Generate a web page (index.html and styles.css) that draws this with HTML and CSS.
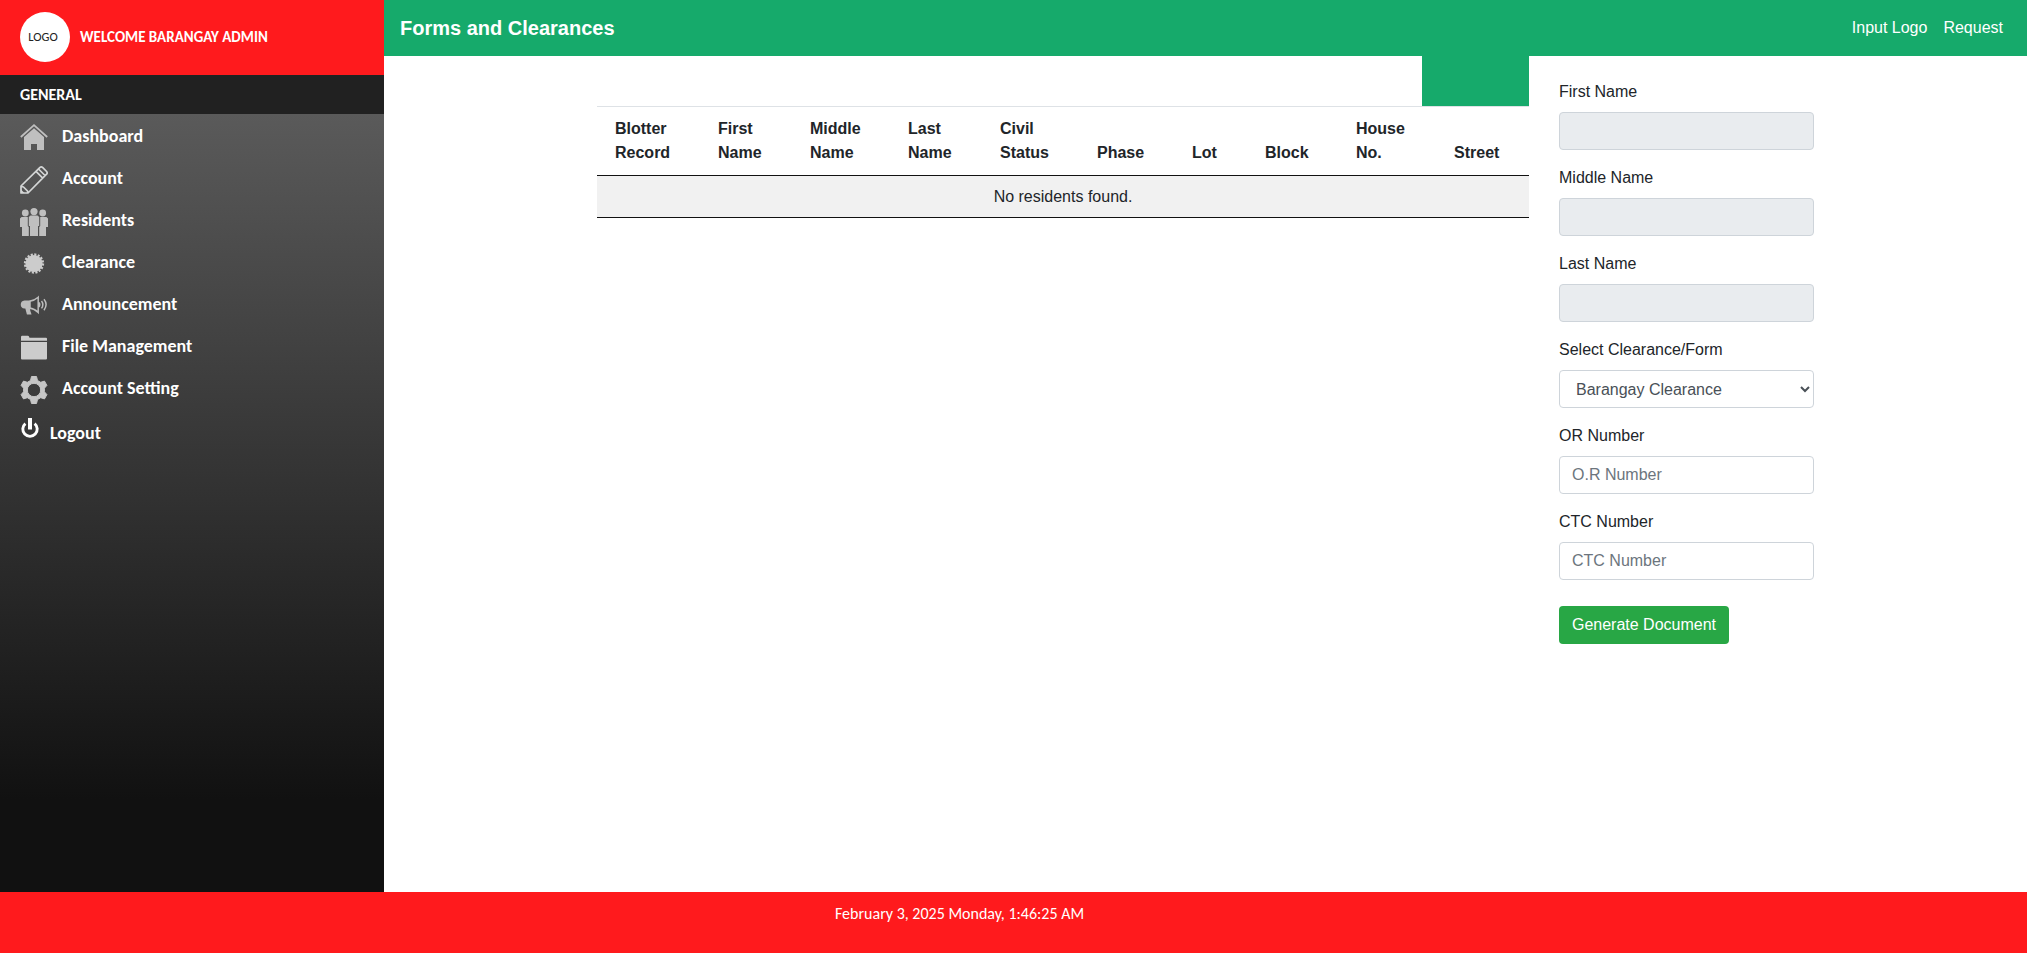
FILE: index.html
```html
<!DOCTYPE html>
<html lang="en">
<head>
<meta charset="utf-8">
<title>Forms and Clearances</title>
<link rel="stylesheet" href="styles.css">
</head>
<body>
<div class="page">
  <aside class="sidebar">
    <div class="brand"><div class="logo"><span>LOGO</span></div><span class="welcome">WELCOME BARANGAY ADMIN</span></div>
    <div class="section"><span>GENERAL</span></div>
    <nav class="menu">
      <a class="item"><svg class="icon" viewBox="0 0 28 28"><path fill="none" stroke="#bfbfbf" stroke-width="1.8" d="M.8 14 14 2.2 27.2 14"/><path fill="#bfbfbf" d="M14 5.2 24 14v13h-7v-6h-6v6H4V14z"/></svg><span>Dashboard</span></a>
      <a class="item"><svg class="icon" viewBox="0 0 28 28" fill="none" stroke="#d4d6d6" stroke-width="1.7" stroke-linejoin="round"><path d="M1 27V20L20 1.400q1.400-1 2.800.3l3.800 3.800q1.200 1.400 0 2.700L8 27zM16 5.300l6.500 6.500M18.500 3l6.500 6.500M1.500 20.500l2 .5 4 4 .5 2"/><path fill="#d4d6d6" stroke="none" d="M1 23.500 4.500 27H1z"/></svg><span>Account</span></a>
      <a class="item"><svg class="icon" viewBox="0 0 28 28" fill="#bfbfbf"><circle cx="5.300" cy="5" r="3.400"/><circle cx="22.700" cy="5" r="3.400"/><path d="M1.500 9h6.300v9l1 1v9H2V19H0v-8.500zM26.500 9h-6.300v9l-1 1v9H26v-9h2v-8.500z"/><circle cx="14" cy="3.600" r="3.600"/><path d="M10.500 7.500h7l1.700 1.500v9h-1.200v10h-8V18H8.800V9z"/></svg><span>Residents</span></a>
      <a class="item"><svg class="icon" viewBox="0 0 28 28"><circle cx="14" cy="13.500" r="8.600" fill="#ccc"/><circle cx="14" cy="13.500" r="9" fill="none" stroke="#ccc" stroke-width="2.300" stroke-dasharray="2.100 1.434"/></svg><span>Clearance</span></a>
      <a class="item"><svg class="icon" viewBox="0 0 28 28" fill="none" stroke="#bdbdbd" stroke-width="1.500"><path fill="#bdbdbd" d="M10 9.200H4.500Q1.500 9.500 1.500 12.500T4.500 15.800H10zM6 16l1.500 5.800h3l-1-3V16z"/><path d="M9.500 9.200q5-.7 8.700-4v15.200q-3.700-3.700-8.700-4.400M19 10.500q1.500 2 0 4.500M21.500 9q2.700 3.600 0 7.400M24 7.200q4.200 5.300 0 11"/></svg><span>Announcement</span></a>
      <a class="item"><svg class="icon" viewBox="0 0 28 28" fill="#ccc"><path d="M1 6.800V3q0-1.200 1.200-1.200H8q1 0 1.500 2H26q1 0 1 1v2zM1 8h26v16.600q0 1-1 1H2q-1 0-1-1z"/></svg><span>File Management</span></a>
      <a class="item"><svg class="icon" viewBox="0 0 28 28"><path fill="#c6c6c6" fill-rule="evenodd" stroke="#c6c6c6" stroke-linejoin="round" d="M11.500.5h5l1 4 3.200 1.800 3.800-1.200 2.400 4.300-2.500 2.800v3.600l2.500 2.800-2.400 4.300-3.800-1.200-3.200 1.800-1 4h-5l-1-4-3.200-1.800-3.800 1.200-2.400-4.300 2.500-2.800v-3.600L1.100 9.400l2.400-4.300 3.800 1.200 3.200-1.800zM14 7.300a6.700 6.700 0 1 0 0 13.400 6.700 6.700 0 0 0 0-13.400z"/></svg><span>Account Setting</span></a>
      <a class="item logout"><svg class="power" viewBox="0 0 20 22"><path fill="none" stroke="#fff" stroke-width="2.900" d="M5.400 5.600a7.200 7.200 0 1 0 9.200 0"/><path fill="#fff" d="M8 0h4v11.500H8z"/></svg><span>Logout</span></a>
    </nav>
  </aside>
  <main class="main">
    <header class="topbar"><h1>Forms and Clearances</h1><div class="links"><a>Input Logo</a><a>Request</a></div></header>
    <div class="content">
      <section class="records">
        <div class="action"></div>
        <table>
          <colgroup><col class="c1"><col class="c2"><col class="c3"><col class="c4"><col class="c5"><col class="c6"><col class="c7"><col class="c8"><col class="c9"><col class="c10"></colgroup>
          <thead><tr><th>Blotter<br>Record</th><th>First<br>Name</th><th>Middle<br>Name</th><th>Last<br>Name</th><th>Civil<br>Status</th><th>Phase</th><th>Lot</th><th>Block</th><th>House<br>No.</th><th>Street</th></tr></thead>
          <tbody><tr><td colspan="10">No residents found.</td></tr></tbody>
        </table>
      </section>
      <form class="form">
        <label>First Name</label><input disabled>
        <label>Middle Name</label><input disabled>
        <label>Last Name</label><input disabled>
        <label>Select Clearance/Form</label><select><option>Barangay Clearance</option></select>
        <label>OR Number</label><input placeholder="O.R Number">
        <label>CTC Number</label><input placeholder="CTC Number">
        <button type="button">Generate Document</button>
      </form>
    </div>
  </main>
  <footer class="footer"><span>February 3, 2025 Monday, 1:46:25 AM</span></footer>
</div>
</body>
</html>
```
FILE: styles.css
```css
* { box-sizing: border-box; }
body { margin: 0; font: 16px/24px "Liberation Sans", Arial, sans-serif; color: #212529; background: #fff; }
.page { display: grid; grid-template: 892px 61px / 384px 1fr; height: 953px; overflow: hidden; }
.sidebar { display: flex; flex-direction: column; color: #fff; font-family: Carlito, Lato, sans-serif; font-weight: 700; background: linear-gradient(#5a5a5a 114px, #111 800px); }
.brand { height: 75px; background: #ff1a1d; display: flex; align-items: center; gap: 10px; padding: 0 20px 1px; font-size: 15px; }
.logo { width: 50px; height: 50px; border-radius: 50%; background: #fff; color: #222; font-size: 12.5px; font-weight: 400; display: flex; align-items: center; justify-content: center; padding-right: 4px; }
.section { height: 39px; background: #212121; padding: 8px 20px; font-size: 16px; }
.menu { padding-top: 9px; }
.item { display: flex; height: 42px; gap: 14px; padding-left: 20px; font-size: 18px; }
.item > span { padding-top: 1px; }
.icon { width: 28px; height: 28px; flex: none; }
.item:nth-child(n+2) .icon { margin-top: 1px; }
.logout { gap: 10px; }
.logout > span { padding-top: 4px; }
.power { width: 20px; height: 22px; margin-top: 1px; }
.topbar { height: 56px; background: #16aa6b; color: #fff; display: flex; align-items: center; justify-content: space-between; padding: 0 24px 0 16px; }
h1 { margin: 0; font-size: 20px; line-height: 30px; }
.links { display: flex; gap: 16px; }
.content { display: flex; padding-left: 213px; }
.records { width: 932px; }
.action { width: 107px; height: 50px; margin-left: auto; background: #16aa6b; }
table { width: 932px; table-layout: fixed; border-collapse: separate; border-spacing: 0; border-bottom: 1px solid #111; }
th { text-align: left; vertical-align: bottom; border-top: 1px solid #dee2e6; border-bottom: 1px solid #111; padding: 10px 0 10px 18px; }
td { text-align: center; background: #f1f1f1; padding: 9px 0 8px; }
.c1 { width: 103px; } .c2 { width: 92px; } .c3 { width: 98px; } .c4 { width: 92px; } .c5 { width: 97px; }
.c6 { width: 95px; } .c7 { width: 73px; } .c8 { width: 91px; } .c9 { width: 98px; } .c10 { width: 93px; }
.form { width: 255px; margin: 24px 0 0 30px; display: flex; flex-direction: column; }
label { margin-bottom: 8px; }
input, select { width: 100%; height: 38px; margin: 0 0 16px; padding: 6px 12px; border: 1px solid #ced4da; border-radius: 4px; font: inherit; color: #495057; background: #fff; }
input:disabled { background: #e9ecef; }
input::placeholder { color: #6c757d; opacity: 1; }
button { width: 170px; height: 38px; margin-top: 10px; border: 0; border-radius: 4px; background: #28a745; color: #fff; font: inherit; padding: 0; }
.footer { grid-column: 1 / 3; background: #ff1a1d; color: #fff; font-family: Carlito, Lato, sans-serif; font-size: 16px; padding: 10px 0 0 835px; }
```
